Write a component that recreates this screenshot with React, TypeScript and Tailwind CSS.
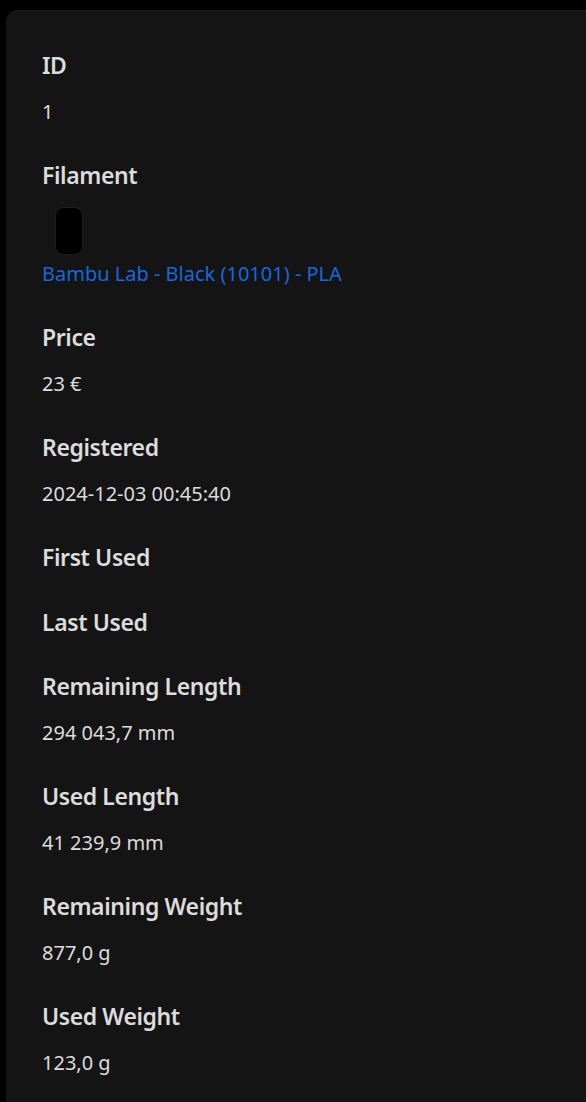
import React from "react";

type Item = { label: string; value?: React.ReactNode };

function Field({ label, value }: Item) {
  return (
    <div className={value === undefined ? "mb-[28.5px]" : "mb-[29px]"}>
      <div className="text-[23px] leading-[36px] font-semibold tracking-[-0.4px] text-[#dcdcdc]">{label}</div>
      {value !== undefined && (
        <div className="mt-[12px] text-[20px] leading-[33px] text-[#dcdcdc]">{value}</div>
      )}
    </div>
  );
}

export default function App() {
  return (
    <div
      className="min-h-screen bg-black pt-[10px] pl-[6px]"
      style={{ fontFamily: '"Noto Sans", "Open Sans", sans-serif' }}
    >
      <div className="min-h-[1092px] rounded-tl-[12px] border-t border-[#1c1c1c] bg-[#141414] px-[36px] pt-[36px]">
        <Field label="ID" value="1" />
        <Field
          label="Filament"
          value={
            <div>
              <div className="pt-[3px] pb-[3px]">
                <div className="ml-[14px] h-[46px] w-[26px] rounded-[7px] bg-black shadow-[0_0_2px_rgba(255,255,255,0.15)]" />
              </div>
              <a className="text-[#1668dc] cursor-pointer">Bambu Lab - Black (10101) - PLA</a>
            </div>
          }
        />
        <Field label="Price" value="23 €" />
        <Field label="Registered" value="2024-12-03 00:45:40" />
        <Field label="First Used" />
        <Field label="Last Used" />
        <Field label="Remaining Length" value="294 043,7 mm" />
        <Field label="Used Length" value="41 239,9 mm" />
        <Field label="Remaining Weight" value="877,0 g" />
        <Field label="Used Weight" value="123,0 g" />
      </div>
    </div>
  );
}
